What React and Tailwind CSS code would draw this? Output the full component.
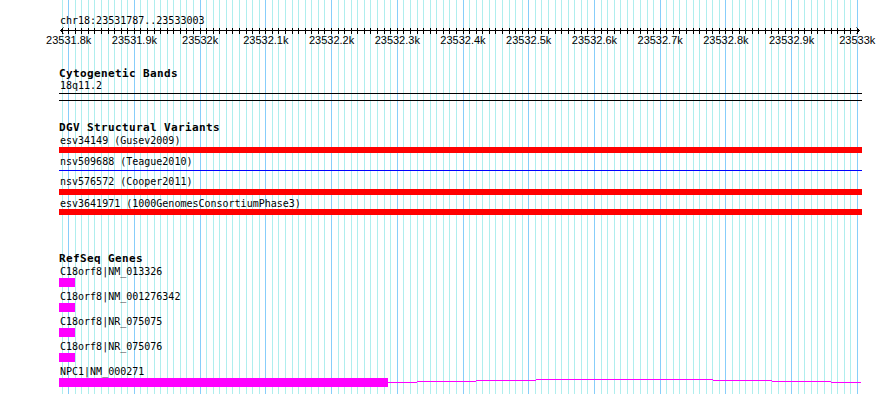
import React from "react";

const px = (bp) => 68.7 + (bp - 23531800) * 0.65717;

const gridBps = [];
for (let bp = 23531790; bp <= 23533000; bp += 10) gridBps.push(bp);

const labels = [
  [23531800, "23531.8k"],
  [23531900, "23531.9k"],
  [23532000, "23532k"],
  [23532100, "23532.1k"],
  [23532200, "23532.2k"],
  [23532300, "23532.3k"],
  [23532400, "23532.4k"],
  [23532500, "23532.5k"],
  [23532600, "23532.6k"],
  [23532700, "23532.7k"],
  [23532800, "23532.8k"],
  [23532900, "23532.9k"],
  [23533000, "23533k"],
];

function Grid() {
  return (
    <svg
      className="absolute left-0 top-0"
      width="890"
      height="394"
      shapeRendering="crispEdges"
    >
      {gridBps.map((bp) => {
        const x = Math.floor(px(bp)) + 0.5;
        const dark = bp % 100 === 0;
        return (
          <line
            key={bp}
            x1={x}
            x2={x}
            y1={0}
            y2={394}
            stroke={dark ? "#87cefa" : "#afeeee"}
            strokeWidth="1"
          />
        );
      })}
    </svg>
  );
}

function Ruler() {
  return (
    <svg
      className="block -ml-[59px] overflow-visible font-['Liberation_Sans',Arial,sans-serif] text-[11px]"
      width="890"
      height="20"
    >
      <g shapeRendering="crispEdges" stroke="#000" strokeWidth="1">
        <line x1="60" x2="860" y1="3.5" y2="3.5" />
        {gridBps.map((bp) => {
          const x = Math.floor(px(bp)) + 0.5;
          return <line key={bp} x1={x} x2={x} y1="1" y2="7" />;
        })}
      </g>
      <g stroke="#000" strokeWidth="1" fill="none">
        <polyline points="63.5,0.5 60.5,3.5 63.5,6.5" />
        <polyline points="856.5,0.5 859.5,3.5 856.5,6.5" />
      </g>
      {labels.map(([bp, t]) => (
        <text key={bp} x={px(bp)} y="17" textAnchor="middle" fill="#000">
          {t}
        </text>
      ))}
    </svg>
  );
}

function Heading({ children, className = "" }) {
  return (
    <div
      className={
        "h-[12px] leading-[12px] text-[11px] font-bold tracking-[0.38px] whitespace-nowrap " +
        className
      }
    >
      {children}
    </div>
  );
}

function Label({ children, className = "" }) {
  return (
    <div className={"h-[12px] leading-[12px] whitespace-nowrap " + className}>
      {children}
    </div>
  );
}

function GeneBox({ className = "" }) {
  return <div className={"w-[16px] h-[9px] bg-[#ff00ff] " + className} />;
}

export default function App() {
  return (
    <div className="relative w-[890px] h-[394px] overflow-hidden bg-white">
      <Grid />
      <div className="relative pl-[59px] w-[862px] font-['DejaVu_Sans_Mono',monospace] text-[10px] text-black">
        <Label className="mt-[15px] pl-[1px]">chr18:23531787..23533003</Label>
        <Ruler />

        <Heading className="mt-[21px]">Cytogenetic Bands</Heading>
        <Label className="pl-[1px]">18q11.2</Label>
        <div className="mt-[1px] h-[1px] bg-black" />
        <div className="mt-[6px] h-[1px] bg-black" />

        <Heading className="mt-[21px]">DGV Structural Variants</Heading>
        <Label className="mt-[1px] pl-[1px]">esv34149 (Gusev2009)</Label>
        <div className="h-[6px] bg-[#ff0000]" />
        <Label className="mt-[3px] pl-[1px]">nsv509688 (Teague2010)</Label>
        <div className="mt-[2px] h-[1px] bg-[#0000ff]" />
        <Label className="mt-[5px] pl-[1px]">nsv576572 (Cooper2011)</Label>
        <div className="mt-[1px] h-[6px] bg-[#ff0000]" />
        <Label className="mt-[3px] pl-[1px]">esv3641971 (1000GenomesConsortiumPhase3)</Label>
        <div className="-mt-[1px] h-[6px] bg-[#ff0000]" />

        <Heading className="mt-[38px]">RefSeq Genes</Heading>
        <Label className="mt-[1px] pl-[1px]">C18orf8|NM_013326</Label>
        <GeneBox />
        <Label className="mt-[4px] pl-[1px]">C18orf8|NM_001276342</Label>
        <GeneBox />
        <Label className="mt-[4px] pl-[1px]">C18orf8|NR_075075</Label>
        <GeneBox />
        <Label className="mt-[4px] pl-[1px]">C18orf8|NR_075076</Label>
        <GeneBox />
        <Label className="mt-[4px] pl-[1px]">NPC1|NM_000271</Label>
        <div className="flex h-[9px]">
          <div className="w-[329px] h-[9px] bg-[#ff00ff]" />
          <svg width="473" height="9" shapeRendering="crispEdges" className="block">
            <g fill="#ff00ff">
              <rect x="0" y="4" width="29" height="1" />
              <rect x="29" y="3" width="59" height="1" />
              <rect x="88" y="2" width="60" height="1" />
              <rect x="148" y="1" width="177" height="1" />
              <rect x="325" y="2" width="59" height="1" />
              <rect x="384" y="3" width="59" height="1" />
              <rect x="443" y="4" width="30" height="1" />
            </g>
          </svg>
        </div>
      </div>
    </div>
  );
}
